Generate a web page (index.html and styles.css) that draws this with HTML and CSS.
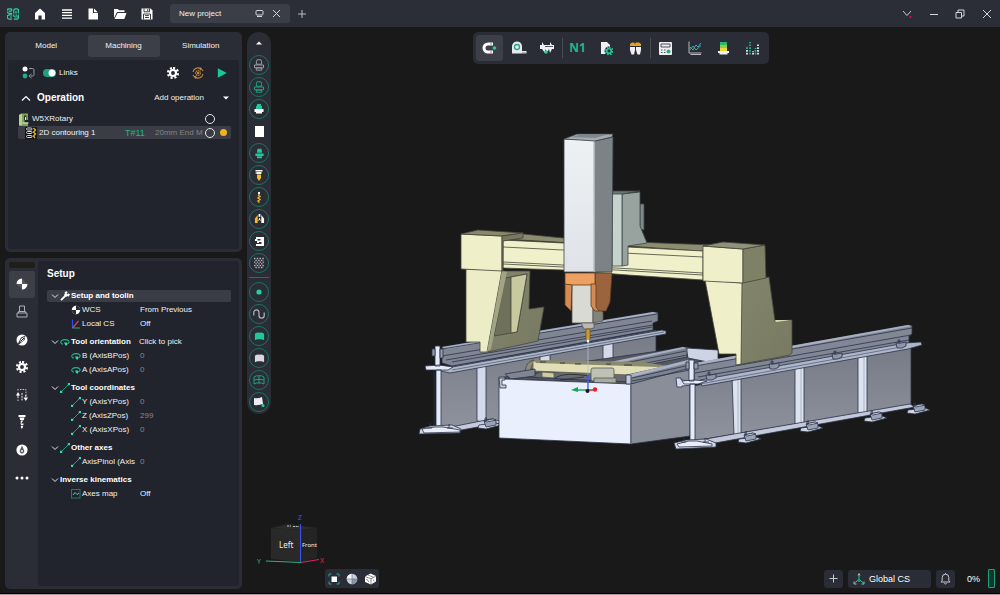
FILE: index.html
```
<!DOCTYPE html>
<html lang="en">
<head>
<meta charset="utf-8">
<title>New project</title>
<link rel="stylesheet" href="styles.css">
</head>
<body>
<svg class="defs" aria-hidden="true">
  <defs>
    <symbol id="gear" viewBox="0 0 12 12"><path fill="none" stroke="currentColor" stroke-width="2.2" stroke-dasharray="2.1 1.83" d="M6 1a5 5 0 1 1 0 10A5 5 0 1 1 6 1"/><circle cx="6" cy="6" r="3" fill="none" stroke="currentColor" stroke-width="2.2"/></symbol>
    <symbol id="holder" viewBox="0 0 12 12"><path d="M4 .8h4l.6 2v2.400H3.400V2.800zM1.500 6h9v2.800h-9zM3.300 9h5.400v2.200H3.300z"/></symbol>
    <symbol id="axis" viewBox="0 0 10 10"><path d="M1.5 8.5l7-7" stroke="#1fae86" stroke-width=".9"/><path d="M0 7.8h2.2V10H0zM7.8 0H10v2.2H7.8z" fill="#2fdcaa"/></symbol>
    <symbol id="rotate" viewBox="0 0 10 10"><path d="M3 7.2C.5 6.6.2 4.800 1.600 3.600 3.300 2.300 7 2.300 8.500 3.600 9.700 4.800 9 6.400 7 7" fill="none" stroke="#22b48b" stroke-width="1.1"/><path d="M4 5.500h3v3H5.500z" fill="#2fdcaa"/></symbol>
    <symbol id="down" viewBox="0 0 8 8"><path d="M1 2.500l3 3 3-3" fill="none" stroke="#e4e5e8"/></symbol>
    <symbol id="sheet" viewBox="0 0 12 12"><path d="M1 3q2-1.600 5-1.200Q9 1.400 11 3v7Q9 8.600 6 9 3 8.600 1 10z"/></symbol>
  </defs>
</svg>

<div class="app">
  <header class="topbar">
    <nav class="topbar__menu" aria-label="File">
      <button class="icon-btn" aria-label="Application"><svg width="12" height="12" viewBox="0 0 12 12" fill="none" stroke="#2fd0a3" stroke-width="1.200"><path d="M5.200 5.300H2A1.500 1.500 0 0 1 2 .8h2a1.200 1.200 0 0 1 0 2.300H1.500M6.800 5.500V2.300A1.500 1.500 0 0 1 8.300.8H10a1.400 1.400 0 0 1 1.400 1.500v3M9 2.800v2.700M5.200 6.800H2.500a2.200 2.200 0 0 0 0 4.400H5M3 9h2M6.800 6.500v1.200A1.400 1.400 0 0 0 8.300 9h3.100V6.500M9.200 6.500V8M11.400 9v1a1.300 1.300 0 0 1-1.300 1.200H6.800"/></svg></button>
      <button class="icon-btn" aria-label="Home"><svg width="12" height="12" viewBox="0 0 12 12" fill="#fff"><path d="M6 .5 11 5v6.500H7.600V7.500H4.400v4H1V5z"/></svg></button>
      <button class="icon-btn" aria-label="Menu"><svg width="12" height="12" viewBox="0 0 12 12" stroke="#fff" stroke-width="1.300"><path d="M1 2h10M1 4.700h10M1 7.400h10M1 10.100h10"/></svg></button>
      <button class="icon-btn" aria-label="New"><svg width="12" height="12" viewBox="0 0 12 12" fill="#fff"><path d="M1.500.5H6V5h5v6.500H1.500zM7 .5 10.800 4.200H7z"/></svg></button>
      <button class="icon-btn" aria-label="Open"><svg width="14" height="12" viewBox="0 0 14 12" fill="#fff"><path d="M1 10V1h4l1 1.300h5.500V4H4zM4.600 5H13.500l-2.200 6H1.500z"/></svg></button>
      <button class="icon-btn" aria-label="Save"><svg width="12" height="12" viewBox="0 0 12 12"><path fill="#fff" d="M.5.5h9l2 2v9H.5z"/><path stroke="#2b2e36" stroke-width=".9" fill="none" d="M3 .5v3.300h5.500V.5M6.800 1v2M2.500 11.500V6h7v5.500M4 7.600h4M4 9.500h4"/></svg></button>
    </nav>
    <div class="project-tab">
      <span class="project-tab__name">New project</span>
      <button class="icon-btn" aria-label="Detach"><svg width="9" height="9" viewBox="0 0 9 9" fill="none" stroke="#d3d4d8"><rect x="1" y="1.500" width="7" height="4.500" rx="1"/><path d="M2 7.500h5"/></svg></button>
      <button class="icon-btn" aria-label="Close project"><svg width="9" height="9" viewBox="0 0 9 9" stroke="#d3d4d8"><path d="M1 1l7 7M8 1 1 8"/></svg></button>
    </div>
    <button class="icon-btn topbar__add" aria-label="Add project"><svg width="10" height="10" viewBox="0 0 10 10" stroke="#b9bbc0"><path d="M5 1v8M1 5h8"/></svg></button>
    <div class="topbar__window">
      <button class="icon-btn" aria-label="Notifications"><svg width="12" height="10" viewBox="0 0 12 10" fill="none" stroke="#c9cacf"><path d="M2 2l4 4.500L10 2"/><circle cx="9.500" cy="8" r="1" fill="#f06" stroke="none"/></svg></button>
      <button class="icon-btn" aria-label="Minimize"><svg width="10" height="10" viewBox="0 0 10 10" stroke="#d3d4d8"><path d="M1 5.500h8"/></svg></button>
      <button class="icon-btn" aria-label="Restore"><svg width="10" height="10" viewBox="0 0 10 10" fill="none" stroke="#d3d4d8"><path d="M1 3.500h5.500V9H1zM3 3V1h6v6H7"/></svg></button>
      <button class="icon-btn" aria-label="Close"><svg width="10" height="10" viewBox="0 0 10 10" stroke="#d3d4d8"><path d="M1 1l8 8M9 1 1 9"/></svg></button>
    </div>
  </header>

  <main class="workspace">
    <aside class="side">
      <section class="panel panel--ops">
        <div class="tabs" role="tablist">
          <button class="tab" role="tab">Model</button>
          <button class="tab tab--active" role="tab" aria-selected="true">Machining</button>
          <button class="tab" role="tab">Simulation</button>
        </div>
        <div class="ops">
          <div class="ops__tools">
            <svg width="13" height="13" viewBox="0 0 13 13"><circle cx="3" cy="3" r="2.500" fill="#fff"/><circle cx="3" cy="10" r="2.400" fill="#1fae86"/><path d="M7 2.500h3.500Q12 2.500 12 4v4.500Q12 10 10.500 10H9M9.500 8 7 10l2.500 2" fill="none" stroke="#9b9ca3"/></svg>
            <label class="switch"><input type="checkbox" checked><span>Links</span></label>
            <button class="icon-btn" aria-label="Settings"><svg width="12" height="12" color="#fff"><use href="#gear"/></svg></button>
            <button class="icon-btn" aria-label="Recalculate"><svg width="12" height="12" viewBox="0 0 12 12" fill="none" stroke="#c98a35" stroke-width="1.100"><path d="M1 5A5 5 0 0 1 9 2M11 7a5 5 0 0 1-8 3M8.500.5 9.500 2.500 7.500 3M3.500 11.500 2.500 9.500 4.500 9M1 8l.6 1.200M11 4l-.6-1.200"/><circle cx="6" cy="6" r="2.300" stroke-dasharray="1.400 .5"/><circle cx="6" cy="6" r=".6"/></svg></button>
            <button class="icon-btn" aria-label="Run"><svg width="10" height="10" viewBox="0 0 10 10" fill="#14c99a"><path d="M.8.3 9.800 5 .8 9.700z"/></svg></button>
          </div>
          <div class="ops__head">
            <svg width="10" height="8" viewBox="0 0 10 8" fill="none" stroke="#fff" stroke-width="1.200"><path d="M1 6.500l4-4 4 4"/></svg>
            <h2 class="title">Operation</h2>
            <button class="ops__add">Add operation<svg width="6" height="4" viewBox="0 0 6 4" fill="#fff"><path d="M0 .5h6L3 3.500z"/></svg></button>
          </div>
          <ul class="ops__list">
            <li class="op op--root">
              <svg width="11" height="13" viewBox="0 0 11 13"><path fill="#7fa35c" d="M1 2 4 .5h6V7H6.500v2.500H10V13H1z"/><path fill="#b9d28f" d="M1 2 4 .5V12H1z"/><path fill="#2a3026" d="M6 2.500h2.500V7H6z"/><path fill="#e9ece4" d="M4.500 9.500h6v1h-6zM7 4h1v3H7z"/></svg>
              <label for="op-root">W5XRotary</label>
              <input class="ring" type="radio" id="op-root" name="op">
            </li>
            <li class="op op--active">
              <svg width="12" height="12" viewBox="0 0 12 12"><rect width="12" height="12" rx="1" fill="#111215"/><g fill="none" stroke="#d8d8da"><rect x="1.500" y="1" width="5.500" height="2" rx="1"/><rect x="1.500" y="4.500" width="5.500" height="2" rx="1"/><rect x="1.500" y="8.500" width="5.500" height="2" rx="1"/></g><path d="M8.500 1l2 2-2 2 2 2-2 2 1.500 2" fill="none" stroke="#e8bb25" stroke-width="1.300"/></svg>
              <label for="op-1">2D contouring 1</label>
              <span class="op__tool">T#11</span>
              <span class="op__mill">20mm End M</span>
              <input class="ring" type="radio" id="op-1" name="op">
              <i class="dot"></i>
            </li>
          </ul>
        </div>
      </section>

      <section class="panel panel--setup">
        <div class="rail">
          <div class="rail__strip"></div>
          <nav class="rail__list" aria-label="Parameters">
            <button class="rail__btn rail__btn--active" aria-label="Setup"><svg width="12" height="12" viewBox="0 0 12 12" fill="#fff"><path d="M6 6V.5A5.500 5.500 0 0 0 .5 6zM6 6h5.500A5.500 5.500 0 0 1 6 11.500z"/><path d="M6 .5 11 6H6zM6 11.500.5 6H6z" opacity=".12"/></svg></button>
            <button class="rail__btn" aria-label="Stock"><svg width="12" height="13" viewBox="0 0 12 13" fill="none" stroke="#aeb0b6"><path d="M3.500 1h5v5.500h-5zM1 8h10v4H1zM2.500 6.500h7V8M2.500 8V6.500"/></svg></button>
            <button class="rail__btn" aria-label="Approach"><svg width="12" height="12" viewBox="0 0 12 12"><circle cx="6" cy="6" r="5.500" fill="#fff"/><path d="M1.500 10.500 5 3.500l4.500-2L8.500 6l-5 4z" fill="#2a2d35"/><path d="M3.500 8.500 5.500 4.500 9 2.500 7 7z" fill="#fff"/><path d="M4.500 7.500 8 4" stroke="#2a2d35"/></svg></button>
            <button class="rail__btn" aria-label="Parameters"><svg width="12" height="12" color="#fff"><use href="#gear"/></svg></button>
            <button class="rail__btn" aria-label="Links"><svg width="14" height="14" viewBox="0 0 14 14" fill="none" stroke="#fff"><path d="M3 13V9M3 1v1.500M5 1.500h6v7" stroke-dasharray="1.500 1.200" stroke="#c8c9cd"/><path d="M1 7.500 3 4l2 3.500zM8.500 9.500h4.500L10.800 13z" fill="#fff" stroke="none"/><path d="M3 7v3M10.800 7v3M7 5v8" stroke-dasharray="1.800 1"/></svg></button>
            <button class="rail__btn" aria-label="Tool"><svg width="10" height="14" viewBox="0 0 10 14" fill="#fff"><path d="M1.500 0h7v2h-7zM2.500 2.500h5L6.800 5H3.200zM3.800 5.500h2.700L4 8.500h2.500v1.200L4 11h2.300L5 14 3.600 12l1-1.500-1-1.500z"/></svg></button>
            <button class="rail__btn" aria-label="Feeds"><svg width="12" height="12" viewBox="0 0 12 12"><circle cx="6" cy="6" r="5.600" fill="#fff"/><path d="M6 1.500 8.200 6.500A2.300 2.300 0 1 1 3.800 6.500z" fill="#555861"/><circle cx="6" cy="7" r="1" fill="#fff"/></svg></button>
            <button class="rail__btn" aria-label="More"><svg width="14" height="4" viewBox="0 0 14 4" fill="#fff"><circle cx="2" cy="2" r="1.500"/><circle cx="7" cy="2" r="1.500"/><circle cx="12" cy="2" r="1.500"/></svg></button>
          </nav>
        </div>
        <div class="setup">
          <h2 class="title">Setup</h2>
          <div class="group">
            <div class="prop prop--head prop--selected"><svg width="8" height="8"><use href="#down"/></svg><svg width="10" height="10" viewBox="0 0 10 10"><path d="M1 9.200 5.500 4.700M5 2.500 7 .7M7.500 5 9.300 3" stroke="#fff" stroke-width="1.900"/><circle cx="6" cy="4" r="1.800" fill="#fff"/></svg><b>Setup and toolin</b></div>
            <div class="prop"><svg width="10" height="10" viewBox="0 0 10 10"><circle cx="5" cy="5" r="4.200" fill="#fff"/><path d="M5 5V.8A4.200 4.200 0 0 1 9.200 5zM5 5v4.200A4.200 4.200 0 0 1 .8 5z" fill="#2b2d33"/></svg><span>WCS</span><output>From Previous</output></div>
            <div class="prop"><svg width="10" height="10" viewBox="0 0 10 10" fill="none"><path d="M1.500 9V.5" stroke="#2b4bff" stroke-width="1.200"/><path d="M1.500 9 7.500 2" stroke="#e0463a" stroke-width="1.200"/><path d="M1.500 9H9" stroke="#239b5a" stroke-width="1.200"/></svg><span>Local CS</span><output>Off</output></div>
          </div>
          <div class="group">
            <div class="prop prop--head"><svg width="8" height="8"><use href="#down"/></svg><svg width="10" height="10"><use href="#rotate"/></svg><b>Tool orientation</b><output>Click to pick</output></div>
            <div class="prop"><svg width="10" height="10"><use href="#rotate"/></svg><span>B (AxisBPos)</span><output class="dim">0</output></div>
            <div class="prop"><svg width="10" height="10"><use href="#rotate"/></svg><span>A (AxisAPos)</span><output class="dim">0</output></div>
          </div>
          <div class="group">
            <div class="prop prop--head"><svg width="8" height="8"><use href="#down"/></svg><svg width="10" height="10"><use href="#axis"/></svg><b>Tool coordinates</b></div>
            <div class="prop"><svg width="10" height="10"><use href="#axis"/></svg><span>Y (AxisYPos)</span><output class="dim">0</output></div>
            <div class="prop"><svg width="10" height="10"><use href="#axis"/></svg><span>Z (AxisZPos)</span><output class="dim">299</output></div>
            <div class="prop"><svg width="10" height="10"><use href="#axis"/></svg><span>X (AxisXPos)</span><output class="dim">0</output></div>
          </div>
          <div class="group">
            <div class="prop prop--head"><svg width="8" height="8"><use href="#down"/></svg><svg width="10" height="10"><use href="#axis"/></svg><b>Other axes</b></div>
            <div class="prop"><svg width="10" height="10"><use href="#axis"/></svg><span>AxisPinol (Axis</span><output class="dim">0</output></div>
          </div>
          <div class="group">
            <div class="prop prop--plain"><svg width="8" height="8"><use href="#down"/></svg><b>Inverse kinematics</b></div>
            <div class="prop"><svg width="10" height="10" viewBox="0 0 10 10" fill="none"><rect x=".5" y=".5" width="8.500" height="8.500" stroke="#1c7d64"/><path d="M2 6 4 3.500 6 5.500 8 4" stroke="#2fdcaa"/></svg><span>Axes map</span><output>Off</output></div>
          </div>
        </div>
      </section>
    </aside>

    <section class="viewport">
      <svg class="scene" viewBox="242 27 758 566" role="img" aria-label="Gantry machine">
        <defs>
          <linearGradient id="col" x1="0" x2="0" y1="0" y2="1"><stop offset="0" stop-color="#eef1f4"/><stop offset="1" stop-color="#dfe3e8"/></linearGradient>
          <linearGradient id="web" x1="0" x2="0" y1="0" y2="1"><stop offset="0" stop-color="#777b85"/><stop offset="1" stop-color="#8f939d"/></linearGradient>
          <linearGradient id="leg" x1="0" x2="1" y1="0" y2="1"><stop offset="0" stop-color="#83856b"/><stop offset="1" stop-color="#777962"/></linearGradient>
          <g id="foot"><path fill="#cfd6e6" d="M-8 3 9 1l5 2-15 4-8-1z"/><path fill="#9aa2b8" d="M-3-1l9-2 3 2v4l-10 2z"/><path fill="#e5eaf5" d="M-3-1l9-2 3 1-9 2z"/><path fill="none" d="M-1-1v-4M-3-3h3"/></g>
          <g id="clip"><path fill="#8e95a9" d="M-4-2h5l5-1v4l-4 2h-5z"/><path fill="none" d="M-1-6v5M-3-4h4"/></g>
        </defs>
        <g stroke="#2a3348" stroke-width=".8" stroke-linejoin="round">
          <!-- rear rail -->
          <path fill="url(#web)" d="M440 368 656 330v22L520 418l-80 14z"/>
          <path fill="#d5daea" d="M477 362l9-2v62l-9-1zM540 351l10-2v16h-10zM603 341l10-2v22l-10 1z"/>
          <path fill="#c5cbdc" d="M446 428l45-9 9 2v2l-44 8z"/>
          <path fill="#808593" d="M442 347 653 312l5 1v8l-5 2v7L452 366l-10-3z"/>
          <path fill="#a9b0c2" stroke="none" d="M442 347 653 312l5 1L446 349z"/>
          <path fill="none" d="M442 349 657 314M442 356 652 321M446 360 653 325M452 362l200-35"/>
          <path fill="#aeb6ca" d="M426 366l26 1 210-37 4 1v3L450 373l-24-5z"/>
          <path fill="none" stroke="#59627a" d="M452 370 664 332"/>
          <path fill="#e6ebf8" d="M435 346h5v20h-5zM425 366l14-1 14 2-5 3h-22zM436 370h5v57h-5zM434 372v54"/>
          <path fill="#929ab0" d="M440 349h3v9h-3zM432 349h3v7h-3z"/>
          <path fill="#cfd6e6" d="M420 429l10-3 22-1 9 4-1 4-41 1z"/>
          <path fill="#e8edf8" d="M422 429l13-2h8l17 3v2l-36 1z"/>
          <path fill="none" d="M430 426v-3M449 428v-4M427 428h5M447 428h6"/>
          <use href="#foot" x="487" y="422"/>

          <!-- tank and table -->
          <path fill="#535862" d="M502 378l30-9 155-22 28 8-25 10-59 20z"/>
          <path fill="#cdd4e4" d="M686 348l32 2v14l-30-6z"/>
          <path fill="#7c818e" d="M610 363 683 347l4 1v9l-45 9z"/>
          <path fill="#a9b0c2" stroke="none" d="M610 362 683 347l4 1-69 15z"/>
          <path fill="none" d="M625 363 686 351M636 365 687 355"/>
          <path fill="#676a70" d="M540 372h92v10l-50-2-55-3z"/>
          <path fill="#8c8b76" stroke="#44453a" d="M525 375c0-8 2-13 8-15l3 1c-5 4-6 9-5 13z"/>
          <path fill="#e2dfb8" stroke="#5e5e4b" d="M533 361l111 2 24 4-38 8-97-4z"/>
          <path fill="#8b8a6d" stroke="none" d="M534 360l110 2 24 4-10 1-122-4z"/>
          <path fill="#cfcca5" stroke="#5e5e4b" d="M542 372l12 1v5l-12-1z"/>
          <path fill="none" stroke="#222831" d="M540 362h6M560 363h5M575 364h6M606 364h5M624 365h8M555 378c8-5 20-4 34-2M560 380l24-3"/>
          <rect x="591" y="368" width="23" height="13" rx="2" fill="#bfc1b5" stroke="#55574e"/>
          <path fill="#a9aba0" stroke="#55574e" d="M594 378h22v5h-22z"/>
          <path fill="#7f8592" d="M505 374l30-5v7l-24 3z"/>
          <path fill="#8a8e98" d="M631 384 690 364v72l-59 8z"/>
          <path fill="#7d8290" d="M627 375 690 361v7l-59 16z"/>
          <path fill="#aab1c3" stroke="none" d="M627 375 688 360l4 2-60 15z"/>
          <path fill="none" d="M632 378 690 365M632 381 690 370"/>
          <path fill="#e9effc" d="M499 377h6v2l126 5v60l-132-6z"/>
          <path fill="#c4cbdc" d="M626 375h5v9h-5zM499 378h6v2h-3v5h4v3h-6z"/>
          <path fill="#6b7180" stroke="none" d="M630 384h2v60h-2z"/>

          <!-- front rail -->
          <path fill="url(#web)" d="M693 386 911 346v59l-218 36z"/>
          <path fill="#dde2ef" d="M732 376l9-2v63l-7-2zM795 366l9-2v62l-9-2zM858 355l9-2v62l-9-2z"/>
          <path fill="none" d="M738 376v60M801 366v58M864 355v58" stroke="#a2a9bc"/>
          <path fill="#c3c9da" d="M700 440l34-6 176-30 5 3-200 36z"/>
          <path fill="#828795" d="M694 364 908 325l4 1v8l-3 2v10L700 384l-6-3z"/>
          <path fill="#a9b0c2" stroke="none" d="M694 363 908 325l4 1-216 40z"/>
          <path fill="none" d="M695 366 912 328M695 373 911 335M698 377 909 340"/>
          <path fill="#aeb6ca" d="M700 380 906 343l15-1 1 3-14 4L702 386z"/>
          <path fill="none" stroke="#5a637c" d="M700 384 906 346"/>
          <path fill="#d7dded" d="M676 378h5v2l12 1v4l-11 1v1h-5z"/>
          <path fill="#e6ebf8" d="M689 360h5v21h-5zM682 381l12-1 13 1-9 3h-14zM690 384h5v57h-5z"/>
          <path fill="#929ab0" d="M694 363h4v6h-4zM686 362h3v7h-3z"/>
          <path fill="#cfd6e6" d="M674 443l12-3 20-1 10 4v4l-40 2z"/>
          <path fill="#e8edf8" d="M677 444l12-3h8l15 3v2l-33 1z"/>
          <path fill="none" d="M684 440v-3M705 442v-4M681 442h5M703 442h6"/>
          <use href="#clip" x="710" y="377"/><use href="#clip" x="773" y="366"/><use href="#clip" x="836" y="356"/><use href="#clip" x="900" y="345"/>
          <use href="#foot" x="747" y="436"/><use href="#foot" x="809" y="425"/><use href="#foot" x="873" y="415"/><use href="#foot" x="916" y="407"/>
        </g>

        <g stroke="#44463a" stroke-width=".8" stroke-linejoin="round">
          <!-- left leg -->
          <path fill="url(#leg)" d="M501 271h29l-1 38 15-2-6 34-50 11z"/>
          <path fill="#6e705a" d="M505 278l22-4-10 58-23 4z"/>
          <path fill="#c9c9a0" d="M511 277l16-3-10 58-6 1z"/>
          <path fill="#ecedc6" d="M466 269l36 1-15 82h-7v-10h-14z"/>
          <path fill="#a3a484" d="M502 271l5 1-16 77-4 3z" stroke="none"/>
          <!-- beam -->
          <path fill="#8c8d70" d="M503 239l20-5 40 4 70 4 80 3v7l-85-6z"/>
          <path fill="#f0f1cb" d="M503 240l60 3 65 4 75 4v29l-75-5-65-5-60-2z"/>
          <path fill="none" d="M503 247l200 10M503 262l60 3 140 8M503 264l60 3 140 8"/>
          <path fill="#efefc9" d="M461 234l41 2v35l-41-2z"/>
          <path fill="#88896c" d="M461 234l17-4 45 3-21 3z"/>
          <path fill="#77785f" d="M502 236l21-3v5l-20 3v30h-1z"/>
          <!-- right leg -->
          <path fill="url(#leg)" d="M741 282l28-5 6 44 17-1v33l-2 2-53 10z"/>
          <path fill="#d9dab4" stroke="none" d="M775 320h17l-16 2z"/>
          <path fill="#efefc9" d="M705 280l37 3-1 81-5 1v-11h-17z"/>
          <path fill="#efefc9" d="M703 246l40 3v34l-40-2z"/>
          <path fill="#7f8166" d="M743 249l22-4 1 33-23 5z"/>
          <path fill="#90917a" d="M703 246l20-4 42 3-22 4z"/>
        </g>

        <g stroke="#3e454a" stroke-width=".8" stroke-linejoin="round">
          <path fill="#7f8986" d="M640 204h4v26l-4-1z"/>
          <path fill="#98a39f" d="M622 194l18-2v34l7 17-19 3v19l-6 1z"/>
          <path fill="#c6d3cd" d="M612 192h10v74h-10z"/>
          <path fill="#6c7774" d="M612 191h28l-18 3h-10z"/>
          <path fill="#7b8387" d="M595 141l18-4-1 135h-17z"/>
          <path fill="url(#col)" d="M564 139l31 1v132h-31z"/>
          <path fill="#a9b0b6" stroke="none" d="M593.500 141h2v131h-2z"/>
          <path fill="#a3abb0" d="M564 139l13-5h36l-1 3-17 4z"/>
          <path fill="#80878b" d="M571 137l8-2h27l-11 3z" stroke="none"/>
        </g>
        <g stroke="#5c3c22" stroke-width=".8" stroke-linejoin="round">
          <path fill="#d9dad4" stroke="#55564f" d="M572 284h21v39h-21z"/>
          <path fill="#82837d" stroke="#55564f" d="M593 304l10 8v9l-10 2z"/>
          <path fill="#9b643d" d="M595 273h17l-2 29-4 9h-7l-7-6v-21h3z"/>
          <path fill="#eda061" d="M565 273h30v12h-30z"/>
          <path fill="#d88b51" d="M565 284l7 1-1 26-6-6zM591 284h5v23l3 4h-4l-4-5z"/>
          <path fill="#b9bab3" stroke="#55564f" d="M581 323h13v5l-4 1h-6z"/>
          <path fill="#d09a2a" stroke="#72531a" d="M586 329h4v11h-4z"/>
        </g>
        <path d="M588 342v33" stroke="#b8bbc8" stroke-width=".8"/>
        <circle cx="588" cy="341" r="1.400" fill="#fff"/>
        <path d="M588 390v-13" stroke="#3d62d8" stroke-width="1.400"/><path d="M586 379l2-6 2 6z" fill="#3d62d8"/>
        <path d="M588 390H576" stroke="#17a35c" stroke-width="1.400"/><path d="M578 387v5l-7-2z" fill="#10a850"/>
        <path d="M588 390h5" stroke="#c22" stroke-width="1.400"/><circle cx="595" cy="389.500" r="2.200" fill="#e2222c"/><circle cx="587.500" cy="391" r="2" fill="#181818"/>
      </svg>

      <div class="strip" role="toolbar" aria-label="Visibility">
        <button class="strip__btn strip__btn--bare" aria-label="Scroll up"><svg width="6" height="4" viewBox="0 0 6 4" fill="#fff"><path d="M0 3.500h6L3 .5z"/></svg></button>
        <button class="strip__btn" aria-label="Part wire"><svg width="12" height="12" fill="none" stroke="#9a9ca6"><use href="#holder"/></svg></button>
        <button class="strip__btn" aria-label="Part"><svg width="12" height="12" fill="none" stroke="#1fa27f"><use href="#holder"/></svg></button>
        <button class="strip__btn" aria-label="Workpiece"><svg width="12" height="12" viewBox="0 0 12 12"><path fill="#1fc896" d="M4 1h4v2h1v3H3V3h1z"/><path fill="#fff" d="M1.500 6h9v3H9v1.500H3V9H1.500z"/></svg></button>
        <button class="strip__btn strip__btn--bare" aria-label="Color"><svg width="9" height="11" viewBox="0 0 9 11"><path fill="#fff" d="M0 0h9v11H0z"/></svg></button>
        <button class="strip__btn" aria-label="Fixture"><svg width="11" height="11" fill="#22c797"><use href="#holder"/></svg></button>
        <button class="strip__btn" aria-label="Tool"><svg width="10" height="11" viewBox="0 0 10 11"><path fill="#f2f2f2" d="M1.500 0h7v1.500h-7zM2.500 2h5v2h-5zM1.500 2.500h1v1h-1z"/><path fill="#f4bd26" d="M3 4.500h4V8L5 11 3 8z"/></svg></button>
        <button class="strip__btn" aria-label="Drill"><svg width="8" height="11" viewBox="0 0 8 11"><path fill="#f2f2f2" d="M3 0h2v2.500H3z"/><path fill="none" stroke="#e9b424" stroke-width="1.500" d="M3 3l2 1.500L3 6l2 1.500L3 9l1.500 1.500"/></svg></button>
        <button class="strip__btn" aria-label="Holder"><svg width="11" height="10" viewBox="0 0 12 11"><path fill="#f4bd26" d="M4 1v9H1V5z"/><path fill="#fff" d="M5 0h2v3H5zM8 1l3 4v5H8z"/><path fill="none" stroke="#fff" d="M6 4.500v2M4.500 7l1.500-1 1.500 1"/></svg></button>
        <button class="strip__btn" aria-label="Machine"><svg width="11" height="11" viewBox="0 0 11 11"><path fill="#fff" d="M2 1h8v9H2V8h5.500V6H5v1H3V5H1V3h1z"/><path fill="#2a2d35" d="M3.500 3h3v1.500h-3z"/></svg></button>
        <button class="strip__btn" aria-label="Texture"><svg width="12" height="12" viewBox="0 0 12 12" stroke="#b6b7bd" stroke-width="1.300" stroke-dasharray="1.400 1.400"><path d="M1 1.500h10M2.400 3.300h8.600M1 5.100h10M2.400 6.900h8.600M1 8.700h10M2.400 10.500h8.600"/></svg></button>
        <hr class="strip__rule">
        <button class="strip__btn" aria-label="Points"><svg width="6" height="6" viewBox="0 0 6 6"><circle cx="3" cy="3" r="2.600" fill="#22d29e"/></svg></button>
        <button class="strip__btn" aria-label="Curves"><svg width="12" height="12" viewBox="0 0 12 12" fill="none" stroke="#b4b5bb" stroke-width="1.200"><path d="M.8 7.500V4.500a2.600 2.600 0 0 1 5.200 0v3a2.600 2.600 0 0 0 5.200 0v-3"/></svg></button>
        <button class="strip__btn" aria-label="Faces"><svg width="11" height="11" fill="#22c797"><use href="#sheet"/></svg></button>
        <button class="strip__btn" aria-label="Shaded"><svg width="11" height="11" fill="#d6d9e2"><use href="#sheet"/></svg></button>
        <button class="strip__btn" aria-label="Mesh"><svg width="12" height="12" viewBox="0 0 12 12" fill="none" stroke="#1fa27f"><use href="#sheet"/><path d="M1 6q5-1.500 10 0M6 2v7"/></svg></button>
        <button class="strip__btn" aria-label="Surface options"><svg width="12" height="12" viewBox="0 0 12 12"><path fill="#eceef3" d="M1 2q4 1 8-1l1 7q-4 1.500-9 1z"/><circle cx="10" cy="9.500" r="1.500" fill="#22d29e"/></svg></button>
      </div>

      <div class="tools" role="toolbar" aria-label="Tools">
        <button class="tools__btn tools__btn--active" aria-label="Snap"><svg width="15" height="14" viewBox="0 0 15 14" fill="none"><path d="M11 3H6a4 4 0 0 0 0 8h5" stroke="#fff" stroke-width="3"/><path d="M9 1.500v3M9 9.500v3" stroke="#8c8f98"/><circle cx="12.500" cy="7" r="1.800" fill="#22d29e"/></svg></button>
        <button class="tools__btn" aria-label="Measure"><svg width="16" height="14" viewBox="0 0 16 14"><path d="M1 12V6a5 5 0 0 1 10-1v5h4.500v2.500H1z" fill="#e8e9ec"/><circle cx="6" cy="6" r="2.500" fill="#e8e9ec" stroke="#22a680" stroke-width="1.300"/><path d="M12 12.500v-1M14 12.500v-1" stroke="#333"/></svg></button>
        <button class="tools__btn" aria-label="Caliper"><svg width="15" height="14" viewBox="0 0 15 14" fill="#f0f0f2"><path d="M0 4h14v4H9l-1 2H6L5 8H0zM2 1l2 3H2zM10 1v3h2zM2 8h3v4zM9 8h3l-2 4z"/><path d="M5 5.500h8" stroke="#555861"/><circle cx="6" cy="11" r="1.800" fill="#22d29e"/></svg></button>
        <i class="tools__rule"></i>
        <button class="tools__btn tools__btn--n1">N1</button>
        <button class="tools__btn" aria-label="Postprocessor"><svg width="14" height="15" viewBox="0 0 14 15"><path fill="#f0f0f2" d="M1 1h6l3 3v3L6 13H1z"/><circle cx="9" cy="10" r="4.500" fill="#2a2d35"/><svg x="4.500" y="5.500" width="9" height="9" color="#22c797"><use href="#gear"/></svg></svg></button>
        <button class="tools__btn" aria-label="Tool library"><svg width="13" height="13" viewBox="0 0 13 13"><path fill="#e59f29" d="M1 2l2-1.500h2L6 2l1-1.500h3L12 2v2H1z"/><path fill="#f0f0f2" d="M1 5h5v3l-1 4.500H2.500L1 8zM7 5h5v3l-1 4.500H8.500L7 8z"/></svg></button>
        <i class="tools__rule"></i>
        <button class="tools__btn" aria-label="Controller"><svg width="13" height="13" viewBox="0 0 13 13"><rect width="13" height="13" rx="1" fill="#f0f0f2"/><path d="M2 2h9v3H2z" fill="#f0f0f2" stroke="#4a4d55"/><path d="M2 8h1.500M5 8h1.500M2 10.500h1.500M5 10.500h1.500" stroke="#4a4d55"/><circle cx="9.500" cy="9.500" r="2" fill="#1fae86"/></svg></button>
        <button class="tools__btn" aria-label="Chart"><svg width="14" height="14" viewBox="0 0 14 14" fill="none"><path d="M1 .5V12h12.500M2.500 13.500H13" stroke="#b7b9c0"/><path d="M2 6l3 3 3-5 2 2 3-4" stroke="#3aa0e8"/><path d="M2 9l3-4 3 4 5-4.500" stroke="#26b98e"/></svg></button>
        <button class="tools__btn" aria-label="Stock color"><svg width="11" height="13" viewBox="0 0 11 13"><path fill="#29b866" d="M2 0h7v3H2z"/><path fill="#8ccf42" d="M2 3h7v3H2z"/><path fill="#f0d83c" d="M2 6h7v3H2z"/><path fill="#f0f0f2" d="M0 9h11v2H9.500v1.500h-8V11H0z"/></svg></button>
        <button class="tools__btn" aria-label="Equalizer"><svg width="13" height="13" viewBox="0 0 13 13" stroke-width="1.700" stroke-dasharray="1.700 1.100"><path stroke="#f0f0f2" d="M1 12.500V8M7 12.500V9M12 12.500V2"/><path stroke="#26b98e" d="M4 12.500V0M9.500 12.500V6M1 7V4"/></svg></button>
      </div>

      <svg class="cube" width="76" height="58" viewBox="254 512 76 58">
        <path fill="#2c2c2c" d="M271 528l17-4 29 4-16 2z"/><path fill="#292929" d="M271 528l30 2v32l-30-3z"/><path fill="#242424" d="M301 530l16-2v30l-16 4z"/>
        <path d="M287 526h4M293 526.500h6" stroke="#bbb" stroke-dasharray="2 .7"/>
        <path d="M300.500 562V524" stroke="#3a50dd" stroke-width="1.200"/><path d="M266 561l35 1.500" stroke="#22b582" stroke-width="1.200"/><path d="M301 562.500l18-3" stroke="#e0245e" stroke-width="1.200"/>
        <text class="cube__face" x="279" y="548">Left</text><text class="cube__face cube__face--small" x="302" y="547">Front</text>
        <text class="cube__axis" x="298" y="520" fill="#3556e8">Z</text><text class="cube__axis" x="257" y="564" fill="#22b582">Y</text><text class="cube__axis" x="320" y="563" fill="#e0245e">X</text>
      </svg>

      <div class="views">
        <button class="icon-btn" aria-label="Fit"><svg width="12" height="12" viewBox="0 0 12 12"><path d="M3.500 3.500h5.500V9H3.500z" fill="#fff"/><path d="M1 3.500V1h2.500M8.500 1H11v2.500M11 8.500V11H8.500M3.500 11H1V8.500" fill="none" stroke="#1fae86"/></svg></button>
        <button class="icon-btn" aria-label="Shading"><svg width="12" height="12" viewBox="0 0 12 12"><circle cx="6" cy="6" r="5.300" fill="#c9cfdb"/><path d="M6 .7A5.300 5.300 0 0 0 .7 6H6z" fill="#f2f4f8"/><path d="M6 6h5.300A5.300 5.300 0 0 1 6 11.300z" fill="#8c95a8"/><path d="M6 .7v10.600M.7 6h10.600" stroke="#68718a" stroke-width=".6"/></svg></button>
        <button class="icon-btn" aria-label="View cube"><svg width="13" height="12" viewBox="0 0 13 12"><path d="M6.500.5 12 3v5.500L7 11.500 1 9V3.500z" fill="#fff"/><path d="M1 3.500l6 2.300L12 3M7 5.800v5.700M4 2l5.500 2.300M2.500 6l2.500 3M9 7l1.500 1" fill="none" stroke="#3c3f47" stroke-width=".6"/></svg></button>
      </div>

      <div class="status">
        <button class="chip chip--square" aria-label="Add coordinate system"><svg width="9" height="9" viewBox="0 0 9 9" stroke="#c9cacf"><path d="M4.500.5v8M.5 4.500h8"/></svg></button>
        <button class="chip chip--cs"><svg width="12" height="12" viewBox="0 0 12 12" fill="none" stroke="#25c898"><path d="M6 6.500V1.500M6 6.500 1.500 10M6 6.500 10.500 10M4 7l2 1.500L8 7"/><path d="M5 2.500l1-2 1 2M1 8.500V11h2.500M11 8.500V11H8.500" stroke="#9fb9b1"/></svg>Global CS</button>
        <button class="chip chip--square" aria-label="Alerts"><svg width="11" height="12" viewBox="0 0 11 12" fill="none" stroke="#c9cacf"><path d="M1 9h9L8.800 7.500V4.500a3.300 3.300 0 0 0-6.600 0v3zM4.300 10.500q1.200 1 2.400 0M5.500 1V0"/></svg></button>
        <span class="status__pct">0%</span>
        <i class="status__bar"></i>
      </div>
    </section>
  </main>
</div>
</body>
</html>
```
FILE: styles.css
```
* { box-sizing: border-box; }

body {
  margin: 0;
  background: #191919;
  color: #f0f1f3;
  font: 8px/12px "Liberation Sans", Arial, sans-serif;
}

button {
  margin: 0;
  padding: 0;
  border: 0;
  background: none;
  color: inherit;
  font: inherit;
}

svg { display: block; flex: none; }
.defs { position: absolute; width: 0; height: 0; }

.app {
  display: flex;
  flex-direction: column;
  min-height: 100vh;
  border-bottom: 1px solid #a7a2aa;
}

.icon-btn { display: grid; place-items: center; }

.topbar {
  display: flex;
  align-items: center;
  height: 27px;
  background: #2b2e36;
}
.topbar__menu {
  display: grid;
  grid-template-columns: repeat(6, 1fr);
  width: 160px;
  margin-right: 10px;
}
.topbar__add { width: 24px; }
.topbar__window {
  display: grid;
  grid-template-columns: repeat(4, 1fr);
  width: 106px;
  margin-left: auto;
}
.project-tab {
  display: flex;
  align-items: center;
  gap: 8px;
  width: 120px;
  height: 19px;
  padding: 0 9px;
  border-radius: 3px;
  background: #3b3e46;
}
.project-tab__name { flex: 1; }

.workspace {
  display: grid;
  grid-template-columns: 242px 1fr;
  flex: 1;
  border-bottom: 1px solid #000;
}

.side {
  display: flex;
  flex-direction: column;
  gap: 6px;
  padding: 5px 0 4px 5px;
}
.panel {
  padding: 3px;
  border-radius: 5px;
  background: #2a2d35;
}
.panel--ops {
  display: flex;
  flex-direction: column;
  min-height: 220px;
}
.panel--setup {
  display: flex;
  flex: 1;
}

.tabs {
  display: grid;
  grid-template-columns: 1fr 72px 1fr;
  gap: 3px;
  height: 22px;
  margin-bottom: 3px;
}
.tab { border-radius: 3px; }
.tab--active { background: #3c3f47; }

.ops {
  flex: 1;
  border-radius: 3px;
  background: #21242d;
}
.ops__tools {
  display: flex;
  align-items: center;
  gap: 13px;
  height: 25px;
  padding: 0 12px 0 14px;
}
.switch {
  display: flex;
  align-items: center;
  gap: 3px;
  flex: 1;
  margin-left: -5px;
}
.switch input {
  appearance: none;
  width: 13px;
  height: 8px;
  margin: 0;
  border-radius: 4px;
  background: radial-gradient(circle at 9px 4px, #fff 3px, #1f9f7d 4px);
}
.ops__head {
  display: flex;
  align-items: center;
  gap: 6px;
  height: 25px;
  padding: 0 10px 0 13px;
}
.title {
  margin: 0;
  color: #fff;
  font-size: 10px;
  line-height: 12px;
}
.ops__add {
  display: flex;
  align-items: center;
  gap: 19px;
  margin-left: auto;
}
.ops__list {
  margin: 0;
  padding: 2px 8px 0 10px;
  list-style: none;
}
.op {
  display: grid;
  align-items: center;
  column-gap: 2px;
  white-space: nowrap;
}
.op--root {
  grid-template-columns: 12px 171px 10px;
  height: 14px;
}
.op--active {
  grid-template-columns: 12px 84px 28px 48px 10px 10px;
  height: 13px;
  padding-left: 7px;
  border-radius: 2px;
  background: #3a3d45;
}
.op__tool {
  color: #22b58c;
  font-size: 9px;
}
.op__mill { color: #81838a; }
.ring {
  appearance: none;
  width: 10px;
  height: 10px;
  margin: 0;
  border: 1px solid #e6e7ea;
  border-radius: 50%;
}
.dot {
  width: 7px;
  height: 7px;
  margin-left: 3px;
  border-radius: 50%;
  background: #f2b01e;
}

.rail {
  width: 30px;
  padding: 1px 3px 0 1px;
}
.rail__strip {
  height: 6px;
  margin-bottom: 3px;
  border-radius: 2px;
  background: #1f1e19;
}
.rail__list {
  display: grid;
  grid-auto-rows: 1fr;
  gap: 1px;
  height: 220px;
}
.rail__btn {
  display: grid;
  place-items: center;
  border-radius: 3px;
}
.rail__btn--active { background: #3c3f47; }

.setup {
  flex: 1;
  min-width: 0;
  padding: 7px 8px 8px 9px;
  border-radius: 3px;
  background: #21242d;
}
.setup .title { margin-bottom: 10px; }
.group { margin-bottom: 4px; }
.prop {
  display: grid;
  grid-template-columns: 10px 56px 1fr;
  align-items: center;
  height: 14px;
  padding-left: 24px;
  column-gap: 1px;
  white-space: nowrap;
}
.prop--head {
  grid-template-columns: 8px 10px 66px 1fr;
  padding-left: 4px;
}
.prop--plain {
  grid-template-columns: 8px 1fr;
  padding-left: 4px;
}
.prop--selected {
  height: 12px;
  margin: 1px 0;
  border-radius: 2px;
  background: #3a3d45;
}
.prop b { color: #fff; }
.prop output { padding-left: 1px; }
.prop .dim { color: #85878e; }

.viewport {
  position: relative;
  overflow: hidden;
}
.scene {
  position: absolute;
  inset: 0;
  width: 100%;
  height: 100%;
}

.strip {
  position: absolute;
  top: 5px;
  left: 5px;
  width: 24px;
  border-radius: 12px;
  background: #2a2d35;
}
.strip__btn {
  display: grid;
  place-items: center;
  width: 20px;
  height: 20px;
  margin: 1px auto 2px;
  border: 1px solid #1c7360;
  border-radius: 50%;
}
.strip__btn--bare { border-color: transparent; }
.strip__rule {
  height: 1px;
  margin: 4px 2px;
  border: 0;
  background: #565860;
}

.tools {
  position: absolute;
  top: 5px;
  left: 50%;
  display: flex;
  align-items: center;
  gap: 2px;
  padding: 3px;
  border-radius: 5px;
  background: #2a2d35;
  transform: translateX(-50%);
}
.tools__btn {
  display: grid;
  place-items: center;
  width: 27px;
  height: 26px;
  border-radius: 3px;
}
.tools__btn--active { background: #3c3f47; }
.tools__btn--n1 {
  color: #22b58c;
  font: bold 12px/14px "Open Sans", sans-serif;
}
.tools__rule {
  width: 1px;
  height: 20px;
  margin: 0 -1px;
  background: #484b53;
}

.cube {
  position: absolute;
  bottom: 23px;
  left: 12px;
}
.cube__face {
  fill: #f0f0f0;
  font: 8px "Noto Sans", sans-serif;
}
.cube__face--small { font-size: 6px; }
.cube__axis { font: 7px "Noto Sans", sans-serif; }

.views {
  position: absolute;
  bottom: 5px;
  left: 83px;
  display: flex;
  gap: 6px;
  height: 19px;
  padding: 0 3px;
  border-radius: 3px;
  background: #2a2d35;
}
.views .icon-btn { width: 12px; }

.status {
  position: absolute;
  right: 5px;
  bottom: 5px;
  display: flex;
  align-items: center;
  gap: 5px;
}
.chip {
  display: flex;
  align-items: center;
  height: 18px;
  border-radius: 3px;
  background: #2a2d35;
}
.chip--square {
  justify-content: center;
  width: 19px;
}
.chip--cs {
  gap: 4px;
  width: 83px;
  padding-left: 5px;
  color: #fff;
  font-size: 9px;
}
.status__pct {
  padding: 0 3px 0 7px;
  color: #fff;
  font-size: 9px;
}
.status__bar {
  width: 7px;
  height: 19px;
  border: 1px solid #1fa27f;
  border-radius: 1px;
  background: #14362d;
}
```
